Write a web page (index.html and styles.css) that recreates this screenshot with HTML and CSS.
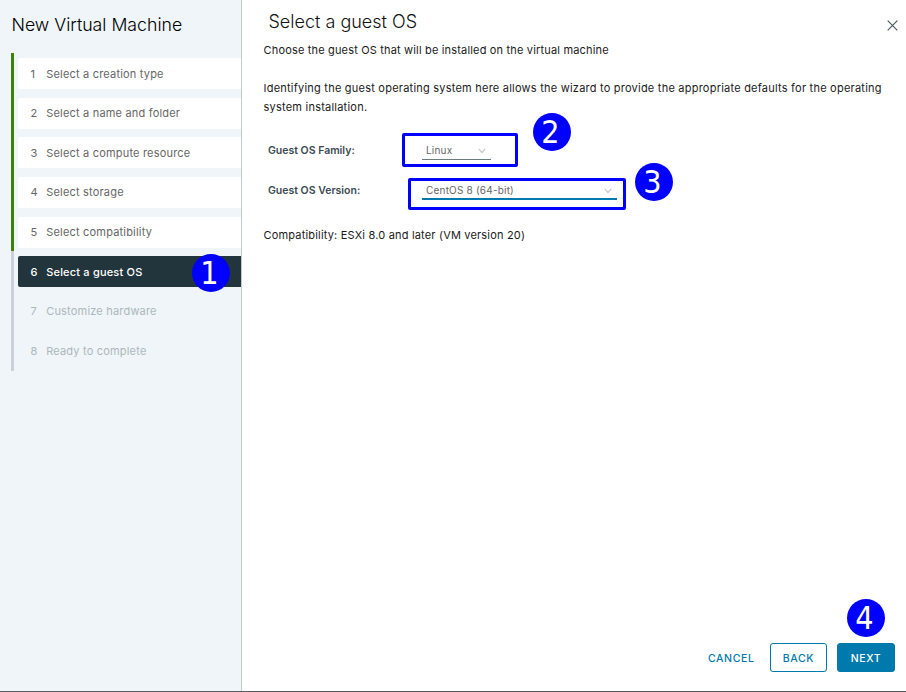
FILE: index.html
```
<!DOCTYPE html>
<html lang="en">
<head>
<meta charset="utf-8">
<title>New Virtual Machine</title>
<link rel="stylesheet" href="styles.css">
</head>
<body>
<div class="wizard">
  <aside class="sidebar">
    <h1 class="wizard-title">New Virtual Machine</h1>
    <ol class="steps">
      <li class="step done"><span class="num">1</span><span>Select a creation type</span></li>
      <li class="step done"><span class="num">2</span><span>Select a name and folder</span></li>
      <li class="step done"><span class="num">3</span><span>Select a compute resource</span></li>
      <li class="step done"><span class="num">4</span><span>Select storage</span></li>
      <li class="step done"><span class="num">5</span><span>Select compatibility</span></li>
      <li class="step active"><span class="num">6</span><span>Select a guest OS</span></li>
      <li class="step"><span class="num">7</span><span>Customize hardware</span></li>
      <li class="step"><span class="num">8</span><span>Ready to complete</span></li>
    </ol>
  </aside>
  <main class="content">
    <header class="head">
      <h2 class="page-title">Select a guest OS</h2>
      <svg class="close" width="11" height="11" viewBox="0 0 11 11"><path d="M.7.7l9.6 9.6M10.3.7L.7 10.3"/></svg>
    </header>
    <p class="lead">Choose the guest OS that will be installed on the virtual machine</p>
    <p class="text">Identifying the guest operating system here allows the wizard to provide the appropriate defaults for the operating<br>system installation.</p>
    <div class="field family">
      <span class="label">Guest OS Family:</span>
      <div class="frame">
        <div class="select"><span>Linux</span><svg width="8" height="6" viewBox="0 0 8 6"><path d="M.8 1L4 4.5 7.2 1"/></svg></div>
      </div>
    </div>
    <div class="field version">
      <span class="label">Guest OS Version:</span>
      <div class="frame">
        <div class="select"><span>CentOS 8 (64-bit)</span><svg width="8" height="6" viewBox="0 0 8 6"><path d="M.8 1L4 4.5 7.2 1"/></svg></div>
      </div>
    </div>
    <p class="compat">Compatibility: ESXi 8.0 and later (VM version 20)</p>
    <footer class="actions">
      <button class="btn link">CANCEL</button>
      <button class="btn outline">BACK</button>
      <button class="btn primary">NEXT</button>
    </footer>
  </main>
  <span class="badge b1">1</span>
  <span class="badge b2">2</span>
  <span class="badge b3">3</span>
  <span class="badge b4">4</span>
</div>
</body>
</html>
```
FILE: styles.css
```
* { box-sizing: border-box; }
body { margin: 0; font: 11px/19px Inter, "Liberation Sans", sans-serif; color: #1a1a1a; background: #fff; }
h1, h2, p, ol { margin: 0; padding: 0; font-weight: 400; }
.wizard { position: relative; display: flex; width: 906px; height: 692px; border-bottom: 1px solid #55595d; overflow: hidden; }

.sidebar { flex: 0 0 242px; background: #eff5f8; border-right: 1px solid #c3cace; }
.wizard-title { height: 53px; padding: 13px 0 0 11.5px; font-size: 17.7px; line-height: 24px; font-weight: 300; color: #000; white-space: nowrap; }
.steps {
  list-style: none; height: 318px; margin-left: 11px; padding: 5.2px 0 0 7px;
  display: flex; flex-direction: column; gap: 8.6px;
  background: linear-gradient(#3c8500 198px, #cbd1d6 198px) 0 0 / 3px 100% no-repeat;
}
.step { flex: 0 0 31px; display: flex; align-items: center; padding: 1px 0 0 12.4px; letter-spacing: .19px; color: #adb7bb; border-radius: 2px 0 0 2px; white-space: nowrap; }
.num { flex: 0 0 15.8px; }
.done { background: #fff; color: #666; }
.active { background: #22343c; color: #fff; font-weight: 500; padding-top: 2px; }

.content { flex: 1; display: flex; flex-direction: column; padding: 10px 11px 19px 21.5px; }
.head { display: flex; justify-content: space-between; height: 31px; padding-left: 5px; }
.page-title { font-size: 18px; line-height: 24px; font-weight: 300; color: #111; }
.close { margin: 10px -3px 0 0; fill: none; stroke: #4a5961; stroke-width: 1.2; }
.lead { letter-spacing: .17px; }
.text { margin-top: 19px; letter-spacing: .226px; white-space: nowrap; }
.field { display: flex; align-items: center; padding-left: 4.5px; }
.label { font-size: 10.5px; font-weight: 600; color: #3b4a54; white-space: nowrap; }
.frame { border: 3px solid #00f; border-radius: 2px; }
.select { display: flex; align-items: center; justify-content: space-between; padding: 0 5px 0 4px; font-size: 10px; letter-spacing: .2px; color: #666; }
.select svg { fill: none; stroke: #b5bbbe; stroke-width: 1.1; }
.family { height: 34px; margin-top: 16px; }
.family .label { width: 134px; }
.family .frame { width: 116px; height: 34px; padding: 6px 0 0 17px; }
.family .select { width: 69px; height: 18px; border-bottom: 1px solid #6a7a81; }
.version { height: 32px; margin-top: 11px; }
.version .label { width: 140px; margin-top: -7px; }
.version .frame { width: 218px; height: 32px; padding: 0 0 0 11px; }
.version .select { width: 195px; height: 19px; padding-top: 2px; border-bottom: 2px solid #0079ad; }
.compat { margin-top: 16px; letter-spacing: .18px; }

.actions { margin-top: auto; display: flex; justify-content: flex-end; }
.btn { height: 29px; padding: 1px 0 0; border: 1px solid #0079ad; border-radius: 3px; background: #fff; color: #0079ad; font: 500 10.5px/27px Inter, sans-serif; letter-spacing: .6px; }
.link { width: 48px; border-color: transparent; margin-right: 15px; }
.outline { width: 57px; margin-right: 10px; }
.primary { width: 58px; background: #0079ad; color: #fff; }

.badge { position: absolute; width: 38px; height: 38px; padding-right: 3px; border-radius: 50%; background: #00f; color: #fff; font: 32px/39px "DejaVu Sans Condensed", "DejaVu Sans", sans-serif; font-stretch: condensed; text-align: center; }
.b1 { left: 192px; top: 254px; }
.b2 { left: 533px; top: 113px; }
.b3 { left: 635px; top: 163px; }
.b4 { left: 847px; top: 599px; }
```
